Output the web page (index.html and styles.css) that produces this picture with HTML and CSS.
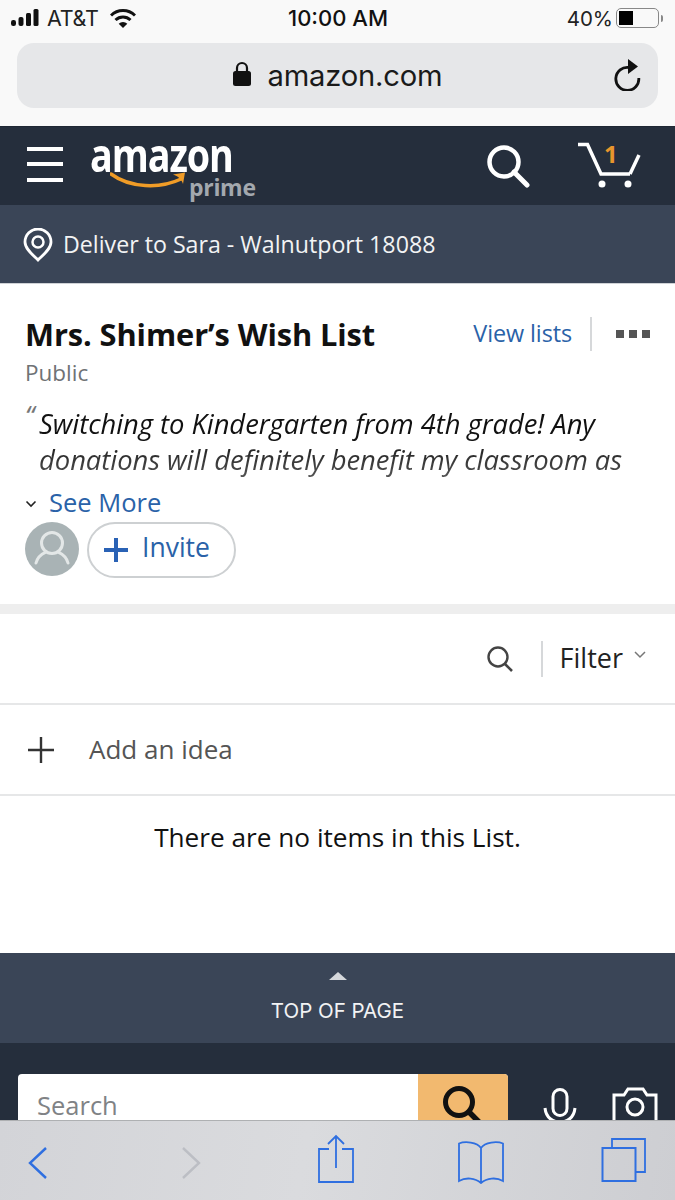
FILE: index.html
```html
<!DOCTYPE html>
<html lang="en">
<head>
<meta charset="utf-8">
<title>Mrs. Shimer's Wish List</title>
<link rel="stylesheet" href="styles.css">
</head>
<body>
<div class="phone">
  <header class="chrome">
    <div class="status">
      <div class="status-left">
        <svg class="signal" width="32" height="18" viewBox="0 0 32 18"><rect x="0" y="11" width="5" height="6" rx="2.2"/><rect x="7.500" y="8" width="5" height="9" rx="2"/><rect x="15" y="4" width="5" height="13" rx="1.5"/><rect x="22.500" y="0" width="5" height="17" rx="1.5"/></svg>
        <span class="carrier">AT&amp;T</span>
        <svg class="wifi" width="26" height="19" viewBox="0 0 26 19"><path d="M1 6.500a17 17 0 0 1 24 0" fill="none" stroke="#111" stroke-width="3"/><path d="M5.500 11a11 11 0 0 1 15 0" fill="none" stroke="#111" stroke-width="3"/><path d="M13 19l-4.300-4.300a6 6 0 0 1 8.600 0z" fill="#111"/></svg>
      </div>
      <span class="time">10:00 AM</span>
      <div class="status-right">
        <span class="pct">40%</span>
        <span class="battery"><span class="battery-level"></span></span>
        <span class="battery-tip"></span>
      </div>
    </div>
    <div class="address">
      <svg class="lock" width="18" height="25" viewBox="0 0 18 25"><path d="M4 11V7a5 5 0 0 1 10 0v4" fill="none" stroke="#111" stroke-width="2.200"/><rect x="0" y="10" width="18" height="15" rx="2.500" fill="#111"/></svg>
      <span class="domain">amazon.com</span>
      <svg class="reload" width="28" height="32" viewBox="0 0 28 32"><path d="M16 8.500A11.500 11.500 0 1 0 25.800 19" fill="none" stroke="#111" stroke-width="2.800"/><path d="M15 0l10 7.500-10 7.500z" fill="#111"/></svg>
    </div>
  </header>

  <nav class="navbar">
    <div class="burger"><i></i><i></i><i></i></div>
    <div class="logo">
      <span class="logo-word">amazon</span>
      <svg class="smile" width="78" height="22" viewBox="0 0 78 22"><path d="M1 3C20 17 50 18 71 8" fill="none" stroke="#f09c27" stroke-width="3.500" stroke-linecap="round"/><path d="M63 3.500L75 1.500 73 13C72 9 68 5 63 3.500z" fill="#f09c27"/></svg>
      <span class="logo-prime">prime</span>
    </div>
    <div class="nav-spacer"></div>
    <svg class="nav-search" width="44" height="44" viewBox="0 0 44 44"><circle cx="18" cy="18" r="14.500" fill="none" stroke="#fff" stroke-width="4.500"/><path d="M28 28l13 13" stroke="#fff" stroke-width="5" stroke-linecap="round"/></svg>
    <div class="cart">
      <svg width="64" height="48" viewBox="0 0 64 48"><path d="M1 2.500h9.500L24 32h29" fill="none" stroke="#fff" stroke-width="3.500"/><path d="M53 32l9-19" fill="none" stroke="#fff" stroke-width="3.500"/><circle cx="25" cy="42" r="3.500" fill="#fff"/><circle cx="51" cy="42" r="3.500" fill="#fff"/></svg>
      <span class="cart-count">1</span>
    </div>
  </nav>

  <div class="deliver">
    <svg width="30" height="34" viewBox="0 0 30 34"><path d="M15 32C10 27 2 21 2 14a13 13 0 0 1 26 0c0 7-8 13-13 18z" fill="none" stroke="#fff" stroke-width="2.800"/><circle cx="15" cy="14" r="5.500" fill="none" stroke="#fff" stroke-width="2.500"/></svg>
    <span>Deliver to Sara - Walnutport 18088</span>
  </div>

  <main class="list-head">
    <div class="title-row">
      <h1>Mrs. Shimer’s Wish List</h1>
      <a class="view-lists">View lists</a>
      <span class="vrule"></span>
      <span class="dots"><i></i><i></i><i></i></span>
    </div>
    <div class="public">Public</div>
    <div class="quote-wrap">
      <span class="quote-mark">“</span>
      <p class="quote">Switching to Kindergarten from 4th grade! Any<br>donations will definitely benefit my classroom as</p>
    </div>
    <div class="see-more">
      <svg width="12" height="8" viewBox="0 0 12 8"><path d="M1.500 1.500L6 6l4.500-4.500" fill="none" stroke="#222" stroke-width="1.600"/></svg>
      <a>See More</a>
    </div>
    <div class="people">
      <svg class="avatar" width="54" height="54" viewBox="0 0 54 54"><circle cx="27" cy="27" r="27" fill="#a9b3b5"/><circle cx="27" cy="21" r="10.500" fill="none" stroke="#e3e7e7" stroke-width="3"/><path d="M11 41c2-8 8-10 10-11M43 41c-2-8-8-10-10-11" fill="none" stroke="#e3e7e7" stroke-width="3" stroke-linecap="round"/></svg>
      <button class="invite">
        <svg width="26" height="26" viewBox="0 0 26 26"><path d="M13 1v24M1 13h24" stroke="#2a62b5" stroke-width="4"/></svg>
        <span>Invite</span>
      </button>
    </div>
  </main>

  <div class="band"></div>

  <div class="filter-row">
    <svg width="28" height="28" viewBox="0 0 28 28"><circle cx="12" cy="12" r="9.500" fill="none" stroke="#444" stroke-width="2.400"/><path d="M19 19l7 7" stroke="#444" stroke-width="2.600"/></svg>
    <span class="vrule tall"></span>
    <span class="filter">Filter</span>
    <svg class="filter-caret" width="12" height="8" viewBox="0 0 12 8"><path d="M1 1l5 5 5-5" fill="none" stroke="#777" stroke-width="1.500"/></svg>
  </div>

  <div class="add-row">
    <svg width="30" height="30" viewBox="0 0 30 30"><path d="M15 2v26M2 15h26" stroke="#333" stroke-width="2.400"/></svg>
    <span>Add an idea</span>
  </div>

  <div class="empty">There are no items in this List.</div>

  <div class="top-page">
    <span class="tri"></span>
    <span>TOP OF PAGE</span>
  </div>

  <footer class="foot">
    <div class="foot-search">
      <span class="foot-input">Search</span>
      <span class="foot-btn">
        <svg width="42" height="46" viewBox="0 0 42 46"><circle cx="17" cy="17" r="13.500" fill="none" stroke="#111" stroke-width="5"/><path d="M27 27l13 13" stroke="#111" stroke-width="5.500"/></svg>
      </span>
    </div>
    <svg class="mic" width="34" height="40" viewBox="0 0 34 40"><rect x="10" y="1.500" width="14" height="26" rx="7" fill="none" stroke="#fff" stroke-width="3"/><path d="M2 20c1 10 8 14 15 14s14-4 15-14M17 34v6" fill="none" stroke="#fff" stroke-width="3"/></svg>
    <svg class="cam" width="46" height="40" viewBox="0 0 46 40"><path d="M2 8h10l4-6h15l4 6h9v28H2z" fill="none" stroke="#fff" stroke-width="3"/><circle cx="23" cy="20" r="8" fill="none" stroke="#fff" stroke-width="3"/></svg>
  </footer>

  <div class="toolbar">
    <svg width="24" height="34" viewBox="0 0 24 34"><path d="M19 2L3 17l16 15" fill="none" stroke="#2f6fe0" stroke-width="2.400"/></svg>
    <svg width="24" height="34" viewBox="0 0 24 34"><path d="M4 2l16 15L4 32" fill="none" stroke="#bcbec4" stroke-width="2.400"/></svg>
    <svg width="38" height="50" viewBox="0 0 38 50"><path d="M12 15H2v33h34V15H25" fill="none" stroke="#2f6fe0" stroke-width="1.800"/><path d="M19 34V3M11 10l8-8 8 8" fill="none" stroke="#2f6fe0" stroke-width="1.800"/></svg>
    <svg width="48" height="44" viewBox="0 0 48 44"><path d="M24 8C20 2 8 1 2 3.500V41c7-4 16-3 22 2 6-5 15-6 22-2V3.500C40 1 28 2 24 8zM24 8v34" fill="none" stroke="#2f6fe0" stroke-width="1.800"/></svg>
    <svg width="46" height="46" viewBox="0 0 46 46"><path d="M11 11V2h33v33h-10" fill="none" stroke="#2f6fe0" stroke-width="1.800"/><rect x="1.500" y="11" width="33" height="33" fill="none" stroke="#2f6fe0" stroke-width="2"/></svg>
  </div>
</div>
</body>
</html>
```
FILE: styles.css
```css
* { box-sizing: border-box; }
html, body { margin: 0; padding: 0; }
body { background: #fff; font-family: "Open Sans", "Noto Sans", sans-serif; color: #111; }
.phone { width: 675px; height: 1200px; overflow: hidden; display: flex; flex-direction: column; }

/* Browser chrome */
.chrome { height: 126px; flex: none; background: #f9f9f9; padding: 0 17px 0 17px; }
.status { height: 43px; display: flex; align-items: center; justify-content: space-between; padding-bottom: 7px; font-family: Inter, sans-serif; font-size: 20px; }
.status-left { display: flex; align-items: center; margin-left: -6px; width: 160px; }
.signal { fill: #111; }
.carrier { margin-left: 4px; font-size: 21.500px; letter-spacing: -.3px; color: #222; }
.wifi { margin-left: 12px; }
.time { font-weight: 500; font-size: 22px; color: #111; margin-left: 2px; }
.status-right { display: flex; align-items: center; width: 160px; justify-content: flex-end; margin-right: -5px; }
.pct { color: #222; font-size: 20.500px; margin-right: 3px; }
.battery { width: 43px; height: 20px; border: 1.500px solid #888; border-radius: 5px; padding: 2px; display: block; }
.battery-level { display: block; width: 14px; height: 100%; background: #000; }
.battery-tip { width: 2px; height: 7px; margin-left: 2px; background: #888; border-radius: 0 2px 2px 0; }
.address { height: 65px; background: #e6e7e9; border-radius: 17px; display: flex; align-items: center; justify-content: center; position: relative; }
.lock { margin-right: 17px; margin-top: -4px; }
.domain { font-size: 29.200px; color: #1a1a1a; font-family: Inter, sans-serif; letter-spacing: -.2px; }
.reload { position: absolute; right: 17px; top: 16px; }

/* Amazon nav */
.navbar { height: 79px; flex: none; background: #252e3c; display: flex; align-items: center; padding: 0 34px 0 27px; border-top: 1px solid #1f2733; }
.burger { width: 36px; display: flex; flex-direction: column; gap: 11.500px; margin-top: -4px; }
.burger i { display: block; height: 4px; background: #fff; }
.logo { position: relative; width: 166px; height: 79px; margin-left: 28px; }
.logo-word { position: absolute; left: -1px; top: 11px; font-size: 46px; line-height: 32px; font-weight: 700; color: #fff; letter-spacing: -1.300px; transform: scaleX(.82); transform-origin: left center; font-family: "Open Sans", sans-serif; }
.smile { position: absolute; left: 19px; top: 44px; }
.logo-prime { position: absolute; left: 98px; top: 44px; font-size: 23px; line-height: 32px; font-weight: 700; color: #a3a8ae; letter-spacing: -.3px; }
.nav-spacer { flex: 1; }
.nav-search { margin-right: 47px; }
.cart { position: relative; width: 64px; height: 48px; }
.cart svg { display: block; }
.cart-count { position: absolute; left: 27px; top: -2px; color: #e8962c; font-size: 24px; line-height: 28px; font-weight: 700; }

.deliver { height: 79px; flex: none; background: #3a4557; display: flex; align-items: center; padding: 0 0 0 23px; color: #f2f3f4; font-size: 23.200px; border-bottom: 1px solid #cfd2d6; gap: 10px; }
.deliver svg { margin-top: 1px; }

/* List header */
.list-head { height: 320px; flex: none; padding: 29px 25px 0 25px; }
.title-row { display: flex; align-items: center; height: 42px; }
h1 { margin: 0; font-size: 30.800px; font-weight: 700; line-height: 42px; color: #111; flex: 1; letter-spacing: -.1px; white-space: nowrap; }
.view-lists { color: #2a62a8; font-size: 23.400px; letter-spacing: -.1px; margin-top: -2px; }
.vrule { width: 2px; background: #d6d8da; height: 34px; display: block; margin: 0 24px 0 18px; }
.dots { display: flex; gap: 5px; }
.dots i { display: block; width: 8px; height: 8px; background: #555; }
.public { color: #6f7275; font-size: 22.500px; line-height: 34px; margin-top: 1px; }
.quote-wrap { position: relative; padding-left: 14px; margin-top: 16px; height: 72px; }
.quote-mark { position: absolute; left: 0; top: -7px; font-size: 27px; font-style: italic; color: #777; line-height: 34px; }
.quote { margin: 0; font-style: italic; font-size: 27.400px; line-height: 36px; white-space: nowrap; background: linear-gradient(#111 45%, #555 100%); -webkit-background-clip: text; background-clip: text; color: transparent; letter-spacing: -.05px; }
.see-more { display: flex; align-items: center; margin-top: 7px; height: 34px; gap: 12px; }
.see-more svg { margin-top: 4px; }
.see-more a { color: #2a62a8; font-size: 25.500px; }
.people { display: flex; align-items: center; gap: 8px; margin-top: 3px; height: 56px; }
.avatar { display: block; margin-top: -2px; }
.invite { height: 56px; width: 149px; border: 2px solid #cdd0d2; border-radius: 28px; background: #fff; display: flex; align-items: center; padding: 0 0 0 14px; gap: 13px; color: #2a62a8; font: 26.500px "Open Sans", sans-serif; }
.invite span { margin-top: -7px; }
.band { height: 10px; flex: none; background: #eeeeee; }

.filter-row { height: 91px; flex: none; display: flex; align-items: center; justify-content: flex-end; padding: 0 29px 0 0; border-bottom: 2px solid #e6e7e8; }
.filter-row .vrule.tall { height: 36px; margin: 0 17px 0 27px; }
.filter { font-size: 27px; color: #222; margin-top: -2px; }
.filter-caret { margin-left: 11px; margin-top: -8px; }
.add-row { height: 91px; flex: none; display: flex; align-items: center; padding-left: 26px; gap: 33px; border-bottom: 2px solid #e6e7e8; font-size: 26px; color: #555; }
.add-row span { margin-top: -2px; }
.empty { height: 157px; flex: none; padding-top: 21px; text-align: center; font-size: 26.200px; line-height: 40px; color: #111; }

.top-page { height: 90px; flex: none; background: #3a4557; color: #f2f3f4; display: flex; flex-direction: column; align-items: center; padding-top: 19px; font-size: 20.500px; gap: 17px; line-height: 28px; font-family: Inter, sans-serif; }
.tri { width: 0; height: 0; border-left: 9px solid transparent; border-right: 9px solid transparent; border-bottom: 8px solid #d5d8dc; }

.foot { height: 77px; flex: none; background: #252e3c; display: flex; align-items: flex-start; padding: 31px 0 0 18px; overflow: hidden; }
.foot-search { width: 490px; height: 62px; flex: none; display: flex; border-radius: 4px 4px 0 0; background: #fff; }
.foot-input { flex: 1; color: #808285; font-size: 25.500px; padding: 16px 0 0 19px; line-height: 30px; }
.foot-btn { width: 90px; background: #f2b96f; display: flex; justify-content: center; padding-top: 11px; border-radius: 0 4px 0 0; }
.mic { margin: 14px 0 0 35px; flex: none; }
.cam { margin: 13px 0 0 35px; flex: none; }

.toolbar { height: 80px; flex: none; background: linear-gradient(100deg, #d3d4d8, #dadbde 45%, #cdced2); border-top: 1px solid #aeb0b2; position: relative; }
.toolbar svg { position: absolute; }
.toolbar svg:nth-child(1) { left: 27px; top: 25px; }
.toolbar svg:nth-child(2) { left: 179px; top: 25px; }
.toolbar svg:nth-child(3) { left: 317px; top: 13px; }
.toolbar svg:nth-child(4) { left: 457px; top: 19px; }
.toolbar svg:nth-child(5) { left: 601px; top: 16px; }
```
